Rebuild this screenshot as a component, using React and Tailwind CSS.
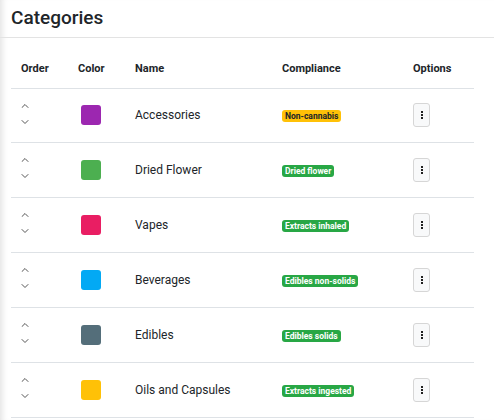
import React from 'react';

const categories = [
  { name: 'Accessories', color: 'bg-[#9c27b0]', compliance: 'Non-cannabis', badge: 'bg-[#ffc107] text-[#212529]' },
  { name: 'Dried Flower', color: 'bg-[#4caf50]', compliance: 'Dried flower', badge: 'bg-[#28a745] text-white' },
  { name: 'Vapes', color: 'bg-[#e91e63]', compliance: 'Extracts inhaled', badge: 'bg-[#28a745] text-white' },
  { name: 'Beverages', color: 'bg-[#03a9f4]', compliance: 'Edibles non-solids', badge: 'bg-[#28a745] text-white' },
  { name: 'Edibles', color: 'bg-[#546e7a]', compliance: 'Edibles solids', badge: 'bg-[#28a745] text-white' },
  { name: 'Oils and Capsules', color: 'bg-[#ffc107]', compliance: 'Extracts ingested', badge: 'bg-[#28a745] text-white' },
];

function Chevron({ up }) {
  return (
    <svg width="8" height="5" viewBox="0 0 8 5" fill="none" stroke="#555" strokeWidth="1" strokeLinecap="round" strokeLinejoin="round">
      {up ? <path d="M1 4.5 L4 1.5 L7 4.5" /> : <path d="M1 0.5 L4 3.5 L7 0.5" />}
    </svg>
  );
}

export default function App() {
  return (
    <div
      className="min-h-[420px] bg-white text-[#212529] shadow-[inset_7px_0_6px_-5px_rgba(0,0,0,0.12)]"
      style={{ fontFamily: 'Roboto, "Liberation Sans", sans-serif' }}
    >
      <div className="h-[38px] border-b border-[#e3e3e3] pl-[11px] pt-[5px]">
        <h1 className="text-[19px] font-medium leading-[26px]">Categories</h1>
      </div>

      <div className="pl-[11px] pr-[20px] pt-[12px]">
        <table className="w-[463px] table-fixed border-collapse">
          <thead>
            <tr className="h-[38px] border-b border-[#dee2e6] text-left text-[11px] font-bold">
              <th className="w-[57px] pl-[10px]">Order</th>
              <th className="w-[57px] pl-[10px]">Color</th>
              <th className="w-[147px] pl-[10px]">Name</th>
              <th className="w-[131px] pl-[10px]">Compliance</th>
              <th className="pl-[10px]">Options</th>
            </tr>
          </thead>
          <tbody>
            {categories.map((c, i) => (
              <tr key={c.name} className={`border-b border-[#dee2e6] text-[12px] ${i === 0 ? 'h-[54px]' : 'h-[55px]'}`}>
                <td className="pl-[10px]">
                  <div className="flex flex-col items-start gap-[12px] pb-[3px]">
                    <Chevron up />
                    <Chevron />
                  </div>
                </td>
                <td className="pl-[13px]">
                  <div className={`h-[20px] w-[20px] rounded-[3px] ${c.color}`} />
                </td>
                <td className="pl-[10px]">{c.name}</td>
                <td className="pl-[10px]">
                  <span className={`inline-block rounded-[3px] px-[3px] text-[8.5px] font-bold leading-[12px] ${c.badge}`}>
                    {c.compliance}
                  </span>
                </td>
                <td className="pl-[10px]">
                  <button className="flex h-[24px] w-[17px] flex-col items-center justify-center gap-[1px] rounded-[3px] border border-[#d6d6d6] bg-[#f8f9fa]">
                    <span className="h-[2px] w-[2px] bg-[#222]" />
                    <span className="h-[2px] w-[2px] bg-[#222]" />
                    <span className="h-[2px] w-[2px] bg-[#222]" />
                  </button>
                </td>
              </tr>
            ))}
          </tbody>
        </table>
      </div>
    </div>
  );
}
